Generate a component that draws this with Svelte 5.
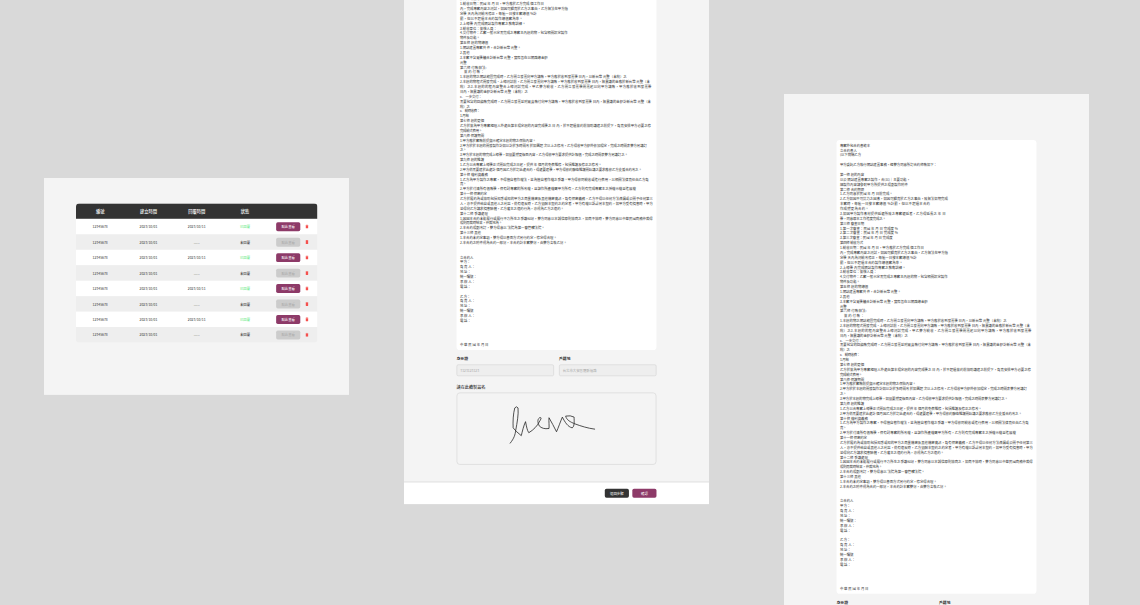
<script>
  const rows = Array.from({ length: 8 }, (_, i) => ({ id: '12345678', created: '2023/10/01', done: i % 2 === 0 }));

  // Each contract line: rendered width in document units, then its text.
  const lines = [
    [142, '專案外包合約書範本'],
    [80, '立合約書人'],
    [99, '(以下簡稱乙方'],
    [0, ''],
    [458, '甲方委託乙方執行網站建置事務，經雙方同意所訂合約條款如下：'],
    [0, ''],
    [114, '第一條 標的內容'],
    [330, '以公 網站建置專案之製作，合(以)｜主要功能，'],
    [321, '細製作內容請參酌甲方所提供之規劃製作附件'],
    [114, '第二條 合約期限'],
    [250, '1.乙方同意於民國 年 月 日前完成。'],
    [510, '2.乙方如因不可抗力之因素，如因可歸責於乙方之事由，致無法如期完成'],
    [420, '本案時，每逾一日按本案總價 %計罰，但以不超過本合約'],
    [137, '作成變更為合約。'],
    [500, '3.如因甲方製作素材提供延遲所致之專案遲延者，乙方得延長之 年 日'],
    [217, '後，同意原本工作進度完成之。'],
    [114, '第三條 審查日期'],
    [269, '1.第一次審查：民國 年 月 日 完成度 %'],
    [269, '2.第二次審查：民國 年 月 日 完成度 %'],
    [250, '3.第三次審查：民國 年 月 日 完成度'],
    [109, '第四條 驗收方式'],
    [397, '1.驗收日期：民國 年 月 日，甲方應於乙方完成 個工作日'],
    [510, '內，完成專案內容之測試，如因可歸責於乙方之事由，乙方無法在甲方指'],
    [357, '定後 天內為測驗改修正，每逾一日按本案總價 %計'],
    [297, '罰，但以不超過本合約製作總價案為準。'],
    [311, '2.上線後 內完成網站製作專案之教育訓練。'],
    [175, '3.驗收單位：簽核人員：'],
    [509, '4.交付物件：乙案一般示定需完成之專案主內標的物，包含相關設定製作'],
    [94, '物件及功能。'],
    [134, '第五條 標的物總價'],
    [288, '1.網站建置專案共 件，合計新台幣 元整。'],
    [47, '2.其他'],
    [415, '3.本案不含買後續合計新台幣 元整，實際旨在以網路總金額'],
    [32, '元整'],
    [126, '第六條 付款辦法:'],
    [118, '　簽約付款：'],
    [788, '1.本標的物之網站範圍完成時，乙方開立發票向甲方請款，甲方應於收到發票後 日內，以新台幣 元整（未稅）之'],
    [897, '2.本標的物程式開發完成、上線測試前，乙方開立發票向甲方請款，甲方應於收到發票後 日內，無異議的金應於新台幣 元整（未'],
    [906, '稅）之3.本標的的程內容整合上線測試完成，甲乙雙方驗收、乙方開立發票後開票起以向甲方請款，甲方應於收到發票後'],
    [321, '日內，無異議的金額計新台幣 元整（未稅）之'],
    [104, 'c.　一步交付：'],
    [902, '需要包含的回饋款完成時，乙方開立發票並附買賣款付向甲方請款，甲方應於收到發票後 日內，無異議的金額計新台幣 元整（未'],
    [47, '稅）之'],
    [95, 'c.　驗時收費：'],
    [42, '1.月結'],
    [114, '第七條 標的更個'],
    [902, '乙方於簽為甲方專案經理人外處由第本規定標的內容完成後之 日 內，於不超過簽約前協助議建之前提下，負責安排甲方必要之修'],
    [104, '完成驗式費用。'],
    [114, '第八條 保護期間'],
    [359, '1.甲方應於案款前提與示確定本標的物之保險內容。'],
    [883, '2.甲方於於本標的開發製作計如以計於多時間改 於如圖超 次以上之修改，乙方得收甲方額外依加規定，完成之時間表雙方另議訂'],
    [29, '之。'],
    [793, '3.甲方於本標的物完成上線後，如須要變更版面內容，乙方得依甲方要求提供計報價，完成之時間表雙方另議訂之。'],
    [114, '第九條 標的維護'],
    [670, '1.乙方以合專案上線後正式開始完成之日起，提供 年 個月的免費維修，包括維護及修正之修改。'],
    [859, '2.甲方倘需要建於此處計 個月因乙方於訂此處合約，得處要建後，甲方得依約聯絡維護開始議之要求應依乙方支援合約改之。'],
    [132, '第十條 權利與義務'],
    [892, '1.乙方為甲方製作之專案，不得擅自著作權法，並為擅自著作權之爭議。甲方得依同驗收或進行費用，以相關法律責任由乙方負'],
    [29, '責。'],
    [831, '2.甲方於付清所有價款後，保有對專案的所改權，且該作所產權屬甲方所有，乙方則有完成專案主之授權示權且進展權'],
    [127, '第十一條 保密約定'],
    [911, '乙方於履約為或協助包括知悉或知的甲方之商業機密及其他機密資訊，負有保密義務，乙方不得以任何方法洩漏或公開予任何第三'],
    [911, '人，亦不提供給自或其他人之利益，倘有違反時，乙方須賠本契約之約定者，甲方有權以訴訟另本契約，如甲方受有損害時，甲方'],
    [491, '並得向乙方請求損害賠償，乙方雇主之違約行為，亦視為乙方之違約。'],
    [132, '第十二條 爭議處理'],
    [911, '1.因因本合約未能履行或履行不力所生之爭議糾紛，雙方同意以本誠信原則協商之，如商不協時，雙方同意以中華民國商務仲裁得'],
    [198, '規則而裁時結果，仲裁地為。'],
    [401, '2.本合約規劃改訂，雙方得意以 法院為第一審管轄法院。'],
    [99, '第十三條 其他'],
    [458, '1.本合約未約定事項，雙方得以書面方式另行約定，修定得合理。'],
    [505, '2.本合約之附件視為合約一部份，本合約計本案雙份，由雙方各執乙份。'],
    [0, ''],
    [0, ''],
    [64, '立合約人'],
    [48, '甲 方：'],
    [72, '負 責 人：'],
    [52, '地 址：'],
    [80, '統一編號：'],
    [72, '承 辦 人：'],
    [52, '電 話：'],
    [0, ''],
    [48, '乙 方：'],
    [72, '負 責 人：'],
    [52, '地 址：'],
    [64, '統一編號'],
    [72, '承 辦 人：'],
    [52, '電 話：'],
    [0, ''],
    [0, ''],
    [0, ''],
    [0, ''],
    [135, '中 華 民 國 年 月 日']
  ];

  function spacing(width, text) {
    if (!text) return 0;
    let natural = 0;
    for (const c of text) {
      natural += c === ' ' ? 3.6 : /[.:()]/.test(c) ? 5 : /[0-9a-z%]/i.test(c) ? 9 : 16;
    }
    return (width - natural) / text.length;
  }
</script>

{#snippet contract()}
  <div class="page">
    <article class="paper">
      {#each lines as [width, text]}
        <p style="letter-spacing: {spacing(width, text)}px">{text}</p>
      {/each}
    </article>
    <div class="fields">
      <div class="field">
        <span class="label">身分證</span>
        <div class="input">T123123123</div>
      </div>
      <div class="field">
        <span class="label">戶籍地</span>
        <div class="input">台北市大安區羅斯福路</div>
      </div>
    </div>
    <div class="sign-label">請在此繪製簽名</div>
    <div class="sign">
      <svg viewBox="19 37 602 217" fill="none" stroke="#222" stroke-width="2.4" stroke-linecap="round" stroke-linejoin="round">
        <path d="M178 190C190 175 193 165 195 150C199 128 204 102 202 82Q197 75 192 82C187 100 186 125 187 143Q194 153 212 167C215 155 219 137 225 124C228 139 230 151 235 158C250 149 261 137 267 125C275 112 274 111 268 112C260 118 263 128 267 137Q277 148 297 145C298 135 296 125 297 112C305 125 312 140 320 155C326 142 331 126 338 110C346 126 355 140 368 143C376 139 374 122 374 110Q363 104 348 107C351 119 362 125 377 131C396 138 415 144 437 147" />
      </svg>
    </div>
  </div>
  <footer>
    <span class="btn dark">返回步驟</span>
    <span class="btn">確認</span>
  </footer>
{/snippet}

<main>
  <section class="board list">
    <div class="table">
      <div class="row head">
        <span>編號</span><span>建立時間</span><span>回覆時間</span><span>狀態</span><span></span>
      </div>
      {#each rows as r}
        <div class="row">
          <span>{r.id}</span>
          <span>{r.created}</span>
          <span>{r.done ? '2023/10/11' : '-----'}</span>
          <span class:ok={r.done}>{r.done ? '已回覆' : '未回覆'}</span>
          <div class="actions">
            <span class="btn" class:off={!r.done}>點此查看</span>
            <svg width="15" height="19" viewBox="0 0 15 19" fill="#f5504e">
              <path d="M5 0h5l1 1.5h3.5v2.5H.5V1.5H4zM1.3 5h12.4v12a2 2 0 0 1-2 2H3.3a2 2 0 0 1-2-2z" />
            </svg>
          </div>
        </div>
      {/each}
    </div>
  </section>
  <section class="board middle">{@render contract()}</section>
  <section class="board right">{@render contract()}</section>
</main>

<style>
  :global(body) {
    margin: 0;
    overflow: hidden;
  }
  main {
    position: relative;
    width: 1140px;
    height: 605px;
    overflow: hidden;
    background: #d9d9d9;
    font-family: 'Noto Sans CJK TC', 'Noto Sans', sans-serif;
    color: #333;
  }
  .board {
    position: absolute;
    width: 1440px;
    transform: scale(0.21181);
    transform-origin: 0 0;
    background: #f4f4f4;
    font-size: 16px;
  }
  .list {
    left: 44px;
    top: 178px;
    height: 1024px;
    box-sizing: border-box;
    padding: 120px 149px 0 151px;
  }
  .middle {
    left: 404px;
    top: 0;
    transform: translateY(-149.8px) scale(0.21181);
  }
  .right {
    left: 784px;
    top: 94px;
  }
  .table {
    border-radius: 16px;
    overflow: hidden;
  }
  .row {
    display: grid;
    grid-template-columns: repeat(5, 1fr);
    align-items: center;
    height: 73px;
    background: #fff;
    text-align: center;
  }
  .row:nth-child(odd) {
    background: #eee;
  }
  .row.head {
    background: #333;
    color: #fff;
    font-size: 20px;
    font-weight: 500;
  }
  .ok {
    color: #64e982;
  }
  .actions {
    display: flex;
    align-items: center;
    gap: 24px;
    padding-left: 33px;
  }
  .btn {
    display: flex;
    align-items: center;
    justify-content: center;
    width: 114px;
    height: 42px;
    border-radius: 8px;
    background: #8d3a68;
    color: #fff;
  }
  .btn.off {
    background: #ccc;
    color: #aaa;
  }
  .btn.dark {
    background: #333;
  }
  .page {
    padding: 217px 248px 78px;
  }
  .paper {
    box-sizing: border-box;
    height: 2143px;
    padding: 14px 16px 0;
    border-radius: 16px;
    background: #fff;
  }
  p {
    margin: 0;
    height: 23px;
    line-height: 23px;
    white-space: pre;
  }
  .fields {
    display: grid;
    grid-template-columns: 1fr 1fr;
    gap: 24px;
    margin-top: 27px;
  }
  .label {
    display: block;
    margin-bottom: 15px;
    font-size: 18px;
    line-height: 26px;
    font-weight: 700;
  }
  .input {
    box-sizing: border-box;
    height: 55px;
    padding: 0 14px;
    border: 3px solid #d4d4d4;
    border-radius: 8px;
    background: #eee;
    color: #aaa;
    line-height: 49px;
  }
  .sign-label {
    margin: 40px 0 8px;
    font-size: 19.5px;
    line-height: 29px;
    font-weight: 500;
  }
  .sign {
    box-sizing: border-box;
    height: 342px;
    border: 4px solid #ddd;
    border-radius: 16px;
  }
  .sign svg {
    display: block;
    width: 100%;
    height: 100%;
  }
  footer {
    box-sizing: border-box;
    display: flex;
    justify-content: flex-end;
    align-items: center;
    gap: 16px;
    height: 107px;
    padding-right: 248px;
    border-top: 5px solid #ddd;
    background: #fff;
  }
</style>
